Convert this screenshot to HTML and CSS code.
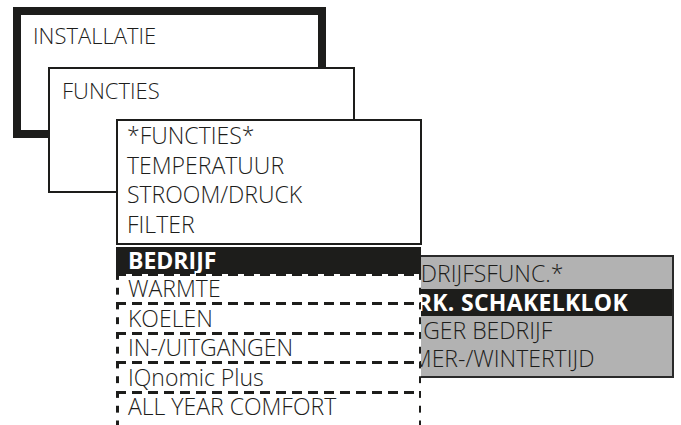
FILE: index.html
```html
<!DOCTYPE html>
<html lang="nl">
<head>
<meta charset="utf-8">
<title>Menu</title>
<link rel="stylesheet" href="styles.css">
</head>
<body>
<div class="canvas">
  <div class="win w-install"><div class="title">INSTALLATIE</div></div>
  <div class="win w-func"><div class="title">FUNCTIES</div></div>
  <div class="win w-menu">
    <div class="row">*FUNCTIES*</div>
    <div class="row">TEMPERATUUR</div>
    <div class="row">STROOM/DRUCK</div>
    <div class="row">FILTER</div>
  </div>
  <div class="win w-sub">
    <div class="srow">*BEDRIJFSFUNC.*</div>
    <div class="srow sel">WERK. SCHAKELKLOK</div>
    <div class="srow">LANGER BEDRIJF</div>
    <div class="srow">ZOMER-/WINTERTIJD</div>
  </div>
  <div class="win w-list">
    <div class="item sel">BEDRIJF</div>
    <div class="item">WARMTE</div>
    <div class="item">KOELEN</div>
    <div class="item">IN-/UITGANGEN</div>
    <div class="item">IQnomic Plus</div>
    <div class="item">ALL YEAR COMFORT</div>
  </div>
</div>
</body>
</html>
```

FILE: styles.css
```css
html, body {
  margin: 0;
  padding: 0;
  background: #fff;
}
body {
  font-family: "Open Sans", "DejaVu Sans", sans-serif;
  font-weight: 300;
  color: #1d1d1b;
  overflow: hidden;
}
.canvas {
  position: relative;
  width: 681px;
  height: 425px;
  overflow: hidden;
}
.win {
  position: absolute;
  box-sizing: border-box;
  background: #fff;
}
.title {
  font-size: 22px;
  line-height: 30px;
  white-space: nowrap;
}
.w-install {
  left: 13px;
  top: 7px;
  width: 313px;
  height: 131px;
  border: 8px solid #1d1d1b;
  padding: 5px 0 0 12px;
}
.w-func {
  left: 48px;
  top: 67px;
  width: 307px;
  height: 126px;
  border: 2px solid #1d1d1b;
  padding: 6px 0 0 12px;
}
.w-menu {
  left: 116px;
  top: 119px;
  width: 306px;
  height: 126px;
  border: 2px solid #1d1d1b;
  padding: 0 0 0 9px;
}
.row {
  font-size: 23px;
  line-height: 29.5px;
  white-space: nowrap;
}
.w-sub {
  left: 370px;
  top: 255px;
  width: 304px;
  height: 123px;
  border: 2px solid #2a2a2a;
  background: #b2b2b2;
  padding-top: 1.5px;
}
.srow {
  font-size: 23px;
  line-height: 28.5px;
  height: 28.5px;
  padding-left: 9px;
  white-space: nowrap;
}
.srow.sel {
  margin-top: 2px;
  height: 26.5px;
  line-height: 26.5px;
  background: #1d1d1b;
  color: #fff;
  font-weight: 700;
  letter-spacing: 0.3px;
}
.w-list {
  left: 116px;
  top: 247px;
  width: 305px;
  height: 200px;
  background-color: #fff;
  background-image:
    linear-gradient(#1d1d1b 0 7px, transparent 7px),
    linear-gradient(#1d1d1b 0 7px, transparent 7px);
  background-size: 2.5px 14.75px, 2.5px 14.75px;
  background-repeat: repeat-y, repeat-y;
  background-position: 0 -3.5px, 100% -3.5px;
}
.item {
  position: relative;
  height: 29.5px;
  line-height: 29.5px;
  font-size: 23px;
  padding-left: 12px;
  white-space: nowrap;
}
.item.sel {
  height: 27px;
  line-height: 27px;
  background: #1d1d1b;
  color: #fff;
  font-weight: 700;
}
.item + .item::before {
  content: "";
  position: absolute;
  left: 0;
  right: 0;
  top: -1.5px;
  height: 3px;
  background: repeating-linear-gradient(90deg, #1d1d1b 0 10.5px, transparent 10.5px 16px);
}
```
